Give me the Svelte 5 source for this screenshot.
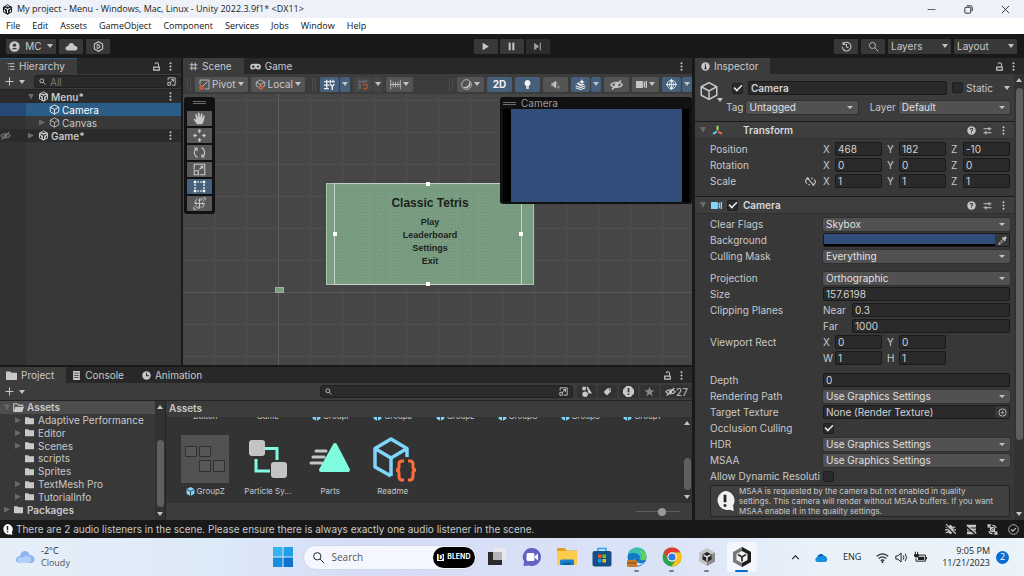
<script>
	const menus = ['File', 'Edit', 'Assets', 'GameObject', 'Component', 'Services', 'Jobs', 'Window', 'Help'];

	const hierarchy = [
		{ name: 'Menu*', icon: 'unity', arrow: 'down', level: 0, scene: true },
		{ name: 'Camera', icon: 'cube', arrow: '', level: 1, selected: true },
		{ name: 'Canvas', icon: 'cube', arrow: 'right', level: 1 },
		{ name: 'Game*', icon: 'unity', arrow: 'right', level: 0, scene: true, hidden: true }
	];

	const tools = [
		{ name: 'Hand', icon: 'hand' },
		{ name: 'Move', icon: 'move' },
		{ name: 'Rotate', icon: 'rotate' },
		{ name: 'Scale', icon: 'scale' },
		{ name: 'Rect', icon: 'rect' },
		{ name: 'Transform', icon: 'transform' }
	];
	let tool = $state('Rect');

	const transform = [
		{ name: 'Position', values: ['468', '182', '-10'] },
		{ name: 'Rotation', values: ['0', '0', '0'] },
		{ name: 'Scale', values: ['1', '1', '1'], link: true }
	];

	const folders = [
		{ name: 'Assets', arrow: 'down', level: 0 },
		{ name: 'Adaptive Performance', arrow: 'right', level: 1 },
		{ name: 'Editor', arrow: 'right', level: 1 },
		{ name: 'Scenes', arrow: 'right', level: 1 },
		{ name: 'scripts', arrow: '', level: 1 },
		{ name: 'Sprites', arrow: '', level: 1 },
		{ name: 'TextMesh Pro', arrow: 'right', level: 1 },
		{ name: 'TutorialInfo', arrow: 'right', level: 1 },
		{ name: 'Packages', arrow: 'right', level: 0 }
	];

	const prevAssets = ['Button', 'Game', 'GroupI', 'GroupJ', 'GroupL', 'GroupO', 'GroupS', 'GroupT'];
	const assets = [
		{ name: 'GroupZ', art: 'groupz', prefab: true },
		{ name: 'Particle Sy...', art: 'particle' },
		{ name: 'Parts', art: 'parts' },
		{ name: 'Readme', art: 'readme' }
	];

	const cube = '<path d="M8 1.3 14.2 4.6V11.4L8 14.7 1.8 11.4V4.6ZM1.8 4.6 8 8l6.2-3.4M8 8v6.7"/>';
	const unity = '<path class="solid" d="M8 .5 14.6 4.2V11.8L8 15.5 1.4 11.8V4.2Z"/><path stroke="var(--hole, #282828)" stroke-width="1.5" d="M8 8v5M8 8 3.8 5.6M8 8l4.2-2.4M5 11.6 3.6 10.6V8.4M11 11.6l1.4-1V8.4M5.8 3.6 8 2.5l2.2 1.1"/>';
	const eyeOff = '<path d="M1 8.5C3.5 4.5 12.5 4.5 15 8.5C12.5 12.5 3.5 12.5 1 8.5Z" stroke-width="1.5"/><circle cx="8" cy="8.5" r="2.5" class="solid"/><path d="M2.5 14 13.5 3" stroke-width="1.8"/>';

	const icons = {
		cube,
		unity,
		eyeOff,
		user: '<circle class="solid" cx="8" cy="8" r="7.5"/><circle cx="8" cy="6" r="2.5" fill="#383838" stroke="none"/><path d="M3.5 12Q8 7.5 12.5 12" fill="#383838" stroke="none"/>',
		cloud: '<path class="solid" d="M4 13C-1 13 0 7.5 4 7.5C4.5 2.5 11 2.5 11.5 7C16.5 7 16.5 13 12.5 13Z"/>',
		gear: '<path stroke-width="1.6" d="M8 1 14 4.5V11.5L8 15 2 11.5V4.5Z"/><path d="M6 5v6l4.5-3ZM6 5c5-1 5 7 0 6"/>',
		play: '<path class="solid" d="M3 1.500v13L14 8Z"/>',
		pause: '<path class="solid" d="M3 1.500h3.500v13H3zM9.500 1.500H13v13H9.500z"/>',
		step: '<path class="solid" d="M2 1.500v13L11 8ZM12 1.500h2v13h-2z"/>',
		history: '<path d="M3 4.5A6.3 6.3 0 1 1 1.8 8.5M3 1.5v3.5h3.5M8 4.5V8.5l3 1.5" stroke-width="1.5"/>',
		search: '<circle cx="6.5" cy="6.5" r="4.5"/><path d="M10 10l5 5"/>',
		list: '<path d="M4 3h11M7 8h8M7 13h8M1 3h1M3.5 8h1M3.5 13h1" stroke-width="1.8"/>',
		lock: '<path class="solid" fill-rule="evenodd" d="M2 8h12v7.500H2zM4 10v3.500h8v-3.500z"/><path d="M11.500 8V4.500Q11.500 1.500 8.500 1.500T5.500 4" stroke-width="1.8"/>',
		dots: '<circle class="solid" cx="8" cy="2.300" r="1.800"/><circle class="solid" cx="8" cy="8" r="1.800"/><circle class="solid" cx="8" cy="13.700" r="1.800"/>',
		plus: '<path d="M8 1v14M1 8h14" stroke-width="1.9"/>',
		picker: '<path d="M2 6V1.5h12.5v13H9M6 9.5 11.5 4.5M7.500 4.500h4v4" stroke-width="1.6"/><path d="M1.500 9.500h5v5h-5z" stroke-width="1.6"/>',
		grid: '<path d="M5 1v14M11 1v14M1 5h14M1 11h14" stroke-width="1.7"/>',
		game: '<path class="solid" fill-rule="evenodd" d="M4.5 4h7a4 4 0 0 1 0 8.5C9.5 12.5 9 11 8 11s-1.5 1.5-3.5 1.5a4 4 0 0 1 0-8.5ZM4 6v1.5H2.5v1.5H4v1.5h1.5V9H7V7.5H5.5V6ZM10 7v2.5h3V7Z"/>',
		pivot: '<path d="M1.5 8V1.5h13v13H8M5.500 10.500 12.5 3.5"/><circle cx="3.500" cy="12.500" r="2.3" stroke="#e0613b" stroke-width="2"/>',
		local: '<path d="M8 1.3 14.2 4.6V10L11 12M1.8 10V4.6L8 1.3M1.8 4.6 8 8l6.2-3.4M8 8v2M1.800 10 5 12"/><circle cx="8.500" cy="12.500" r="2.3" stroke="#e0613b" stroke-width="2"/>',
		gridY: '<path d="M4 1v14M9 1v5M13 1v4M0 4h16M0 9h8M0 14h7" stroke-width="1.8"/><path d="M9 7l3 4 3-4M12 11v5" stroke-width="2"/>',
		magnet: '<path d="M4 1v13M9 1v5M13 1v4M1 4h14M1 9h7M1 13h5" stroke-dasharray="2 1"/><path d="M9 8h3.5a3 3 0 0 1 0 6H9" stroke="#b8502f" stroke-width="2.3"/>',
		ruler: '<path d="M1 1v14M15 1v14M1 8h14M4.5 4v8M8 4v8M11.5 4v8"/>',
		sphere: '<circle cx="8" cy="8" r="7"/><path class="solid" d="M12 3a6 6 0 1 1-9 8.5C8 13 13 9 12 3Z"/>',
		bulb: '<path class="solid" d="M8 0a5.5 5.5 0 0 1 3 10l-.5 2h-5L5 10a5.500 5.500 0 0 1 3-10ZM5.500 13h5v2.500h-5z"/>',
		audio: '<path class="solid" d="M1 5h2v6H1zM4 5l5-3.500v13l-5-3.500z"/><path d="M11 4v4M10.500 10l5 5M15.500 10l-5 5"/>',
		effects: '<path class="solid" d="M1 9l7 2.5L15 9v1.5L8 13.5 1 10.5zM1 12l7 2.5 7-2.5v1.5L8 16 1 13.5zM2 6l4-1 1 2 2 1 3-1 2 1-6 2.5z"/><path class="solid" d="M10 0l1.2 3 3 1.2-3 1.2L10 8.5 8.8 5.4l-3-1.2 3-1.2z"/>',
		camera: '<path class="solid" d="M0 3h10v10H0zM11 5l2-2v10l-2-2zM14 3h2v10h-2z"/>',
		globe: '<circle cx="8" cy="8" r="6.3"/><path d="M8 0v16M0 8h16M8 1.7Q14 8 8 14.3M8 1.7Q2 8 8 14.3"/><path class="solid" d="M6 2.5 8 0l2 2.5zM6 13.5l2 2.5 2-2.5zM0 8l2.5-2v4z"/>',
		info: '<circle class="solid" cx="8" cy="8" r="7.5"/><path d="M8 3v2M6.5 7H8v5M6 12h4" stroke="#282828" stroke-width="2"/>',
		axes: '<path d="M8 8V1" stroke="#9ade5b" stroke-width="3"/><path d="M7 9.500 1.500 13" stroke="#5cc8f5" stroke-width="3"/><path d="M9 9.500l5.500 3.500" stroke="#f0623a" stroke-width="3"/>',
		help: '<circle class="solid" cx="8" cy="8" r="7.5"/><path d="M5.5 6.5Q5.5 4 8 4T10.5 6.3Q10.5 7.5 8 8.5v1.5M8 11v2" stroke="#3e3e3e" stroke-width="1.8"/>',
		preset: '<path d="M1 5h14M11 2v6M1 12h14M5 9v6" stroke-width="1.8"/>',
		link: '<path d="M6 3.500H5a4 4 0 0 0-2 7.500M10 12.500h1a4 4 0 0 0 2-7.500M9 3.500h2M5 12.500h2M2.500 2l11 12" stroke-width="1.600"/>',
		dropper: '<path class="solid" d="M9 3l4-2.5 2.5 2.5L13 7l1 1-1.5 1.5-6-6L8 2z"/><path d="M8.5 6 2.5 12l-1 3 3-1 6-6" stroke-width="1.5"/>',
		target: '<circle cx="8" cy="8" r="6.5" stroke-width="1.5"/><circle class="solid" cx="8" cy="8" r="2"/>',
		folder: '<path class="solid" d="M0 2h6l2 2h8v10.5H0z"/>',
		folderOpen: '<path class="solid" d="M3.5 7H16l-2.5 7.5H.5z"/><path d="M1 13V2.5h5l2 2h6v2" stroke-width="1.600"/>',
		console: '<path class="solid" fill-rule="evenodd" d="M2 0h12v16H2zM4 3v1.5h8V3zM4 7v1.5h8V7zM4 11v1.5h8V11z"/>',
		clock: '<circle class="solid" cx="8" cy="8" r="7.5"/><path d="M8 3v5.5h4.5" stroke="#282828" stroke-width="1.8"/>',
		types: '<circle class="solid" cx="6" cy="12" r="4"/><path class="solid" d="M2 1h5v5H2zM8 1h2l6 10h-5z"/>',
		tag: '<path class="solid" fill-rule="evenodd" d="M8 2h6v6l-7 7-6-6zM11 4v2h2V4z"/>',
		alert: '<path class="solid" d="M5 0h6l5 5v6l-5 5H5l-5-5V5z"/><path d="M8 3v6M8 11v2" stroke="#383838" stroke-width="2.5"/>',
		star: '<path class="solid" d="M8 1l2 5h5.5l-4.5 3.5 1.7 5.5L8 11.8 3.3 15 5 9.5.5 6H6z"/>',
		bubble: '<path class="solid" d="M8 0a7.6 7.6 0 0 1 6.5 11.5L15 16l-3.5-1A7.6 7.6 0 1 1 8 0Z"/><path d="M8 3v6M8 10.5v2" stroke="#222" stroke-width="2.2"/>',
		bug: '<path class="solid" d="M4.500 4q3.500-5 7 0v8q-3.500 5-7 0z"/><path d="M1 4l4 2M0 8.5h5M1 13l4-2M15 4l-4 2M16 8.5h-5M15 13l-4-2" stroke-width="1.8"/><path d="M1 2l14 14" stroke="#191919" stroke-width="2"/><path d="M1.500 0 16 14.500" stroke-width="1.600"/>',
		stack: '<path class="solid" d="M1.500 1h13v4h-13zM1.500 6.500h13v3h-13zM1.500 11h13v4h-13z"/><path d="M1 4l14 12" stroke="#191919" stroke-width="2.4"/><path d="M1 1.5l14 12.500" stroke-width="1.600"/>',
		refresh: '<path d="M6 1.500H2v4M10 14.500h4v-4M2.500 10.500a6 6 0 0 0 5.500 3.500M13.500 5.500a6 6 0 0 0-5.500-3.500" stroke-width="2"/><circle cx="8" cy="8" r="3" stroke-width="1.800"/><path d="M1 1l14 14" stroke-width="1.8"/>',
		ok: '<circle cx="8" cy="8" r="7"/><path d="M4.5 8l2.5 2.5L11.5 6" stroke-width="1.6"/>',
		hand: '<path class="solid" d="M5 15 1 9.5Q.5 8 2 8.2L4 9.5 2.8 3.5Q2.8 2 4.3 2.6L6 7V1.3Q7 0 8 1.3L8.5 7 10 1.8Q11.3 1 11.8 2.3L11.2 7.6 13 4.3Q14.5 3.6 14.5 5L13 12l-2 3z"/>',
		move: '<path d="M8 1v4M8 11v4M1 8h4M11 8h4M6 3l2-2 2 2M6 13l2 2 2-2M3 6 1 8l2 2M13 6l2 2-2 2" stroke-width="1.400"/>',
		rotate: '<path d="M5.5 14A6.5 6.5 0 0 1 4 3M10.5 2A6.5 6.5 0 0 1 12 13M1.5 2.5H5V6M14.5 13.5H11V10" stroke-width="1.4"/>',
		scale: '<path d="M1.5 8V1.5h13v13H8M1.5 9.5h5v5h-5zM8 8l4-4M9 4h3v3" stroke-width="1.400"/>',
		rect: '<path d="M2.500 5v6M13.500 5v6M5 2.500h6M5 13.500h6" stroke-width="1.4" stroke-dasharray="2.400 1.200"/><path class="solid" d="M1 1h3v3H1zM12 1h3v3h-3zM1 12h3v3H1zM12 12h3v3h-3z"/>',
		transform: '<circle cx="8" cy="8" r="6" stroke-dasharray="7 2"/><path d="M8 3v10M3 8h10M6.5 4.5 8 3l1.5 1.5M6.5 11.5 8 13l1.5-1.5M4.5 6.5 3 8l1.5 1.5M11.5 6.5 13 8l-1.500 1.500M12 1h3v3M1 12v3h3"/>',
		prefab: '<path fill="#7fd6fd" stroke="none" d="M8 0 15 3.5V12L8 16 1 12V3.5Z"/><path stroke="#333" stroke-width="1.600" d="M1 4l7 3.5L15 4M8 7.5V16"/>',
		min: '<path d="M1 8h14"/>',
		restore: '<rect x="1.5" y="4" width="10.5" height="10.5" rx="2" stroke-width="1.600"/><path d="M5 1.5h7q2.5 0 2.5 2.5v7" stroke-width="1.600"/>',
		close: '<path d="M1.500 1.500l13 13M14.500 1.500l-13 13" stroke-width="1.500"/>',
		chevron: '<path d="M2 11l6-6 6 6" stroke-width="1.8"/>',
		onedrive: '<path fill="#0a5fb4" stroke="none" d="M3 9C2 4 9 1.5 11 6l-5 6z"/><path fill="#1490df" stroke="none" d="M10 6c5-1 7 6 3 7.500H3c-4-1-3-6 1-6z"/>',
		wifi: '<path d="M1 6.5q7-6 14 0M3.5 9.3q4.5-4 9 0M5.8 11.8q2.2-2 4.4 0" stroke-width="1.5"/><circle class="solid" cx="8" cy="13.5" r="1.3"/>',
		speaker: '<path d="M1 6h2.5L7.5 2.5v11L3.5 10H1zM10 5.5q2 2.5 0 5M12.5 3.500q3.500 4.500 0 9"/>',
		battery: '<path d="M3 5h11v7.500H2.500V9"/><path class="solid" d="M5 7h7.5v4H5zM14.5 7.5H16v2.5h-1.5zM0 4h6v2.500q-3 3-6 0zM1 1h1.200v3H1zM3.800 1H5v3H3.800z"/>'
	};
</script>

{#snippet ico(name, size = 'm')}
	<svg class="ico {size}" viewBox="0 0 16 16" aria-hidden="true">{@html icons[name]}</svg>
{/snippet}

{#snippet dropdown(id, value)}
	<span class="select">
		<select {id}>
			<option>{value}</option>
		</select>
	</span>
{/snippet}

{#snippet axis(name, value)}
	<label class="axis"><span>{name}</span><input type="text" {value} /></label>
{/snippet}

<div class="screen">
	<header class="titlebar">
		{@render ico('unity', 'l')}
		<span class="title">My project - Menu - Windows, Mac, Linux - Unity 2022.3.9f1* &lt;DX11&gt;</span>
		<div class="window-buttons">
			<button aria-label="Minimize">{@render ico('min')}</button>
			<button aria-label="Restore">{@render ico('restore')}</button>
			<button aria-label="Close">{@render ico('close')}</button>
		</div>
	</header>

	<nav class="menubar">
		{#each menus as menu}
			<button>{menu}</button>
		{/each}
	</nav>

	<div class="toolbar">
		<div class="group">
			<button class="btn account">{@render ico('user', 'l')}MC<i class="caret"></i></button>
			<button class="btn" aria-label="Cloud">{@render ico('cloud', 'xl')}</button>
			<button class="btn" aria-label="Services">{@render ico('gear', 'l')}</button>
		</div>
		<div class="group play">
			<button class="btn" aria-label="Play">{@render ico('play')}</button>
			<button class="btn" aria-label="Pause">{@render ico('pause')}</button>
			<button class="btn dim" aria-label="Step">{@render ico('step')}</button>
		</div>
		<div class="group end">
			<button class="btn" aria-label="History">{@render ico('history', 'l')}</button>
			<button class="btn" aria-label="Search">{@render ico('search', 'l')}</button>
			<button class="btn wide">Layers<i class="caret"></i></button>
			<button class="btn wide">Layout<i class="caret"></i></button>
		</div>
	</div>

	<main>
		<div class="left">
			<div class="upper">
				<section class="panel hierarchy">
					<div class="tabs">
						<button class="tab active focus">{@render ico('list')}Hierarchy</button>
						<span class="tab-tools">{@render ico('lock')}{@render ico('dots')}</span>
					</div>
					<div class="panel-bar">
						<button class="add" aria-label="Create">{@render ico('plus')}<i class="caret"></i></button>
						<label class="searchbox">
							{@render ico('search', 's')}
							<input type="text" placeholder="All" aria-label="Search hierarchy" />
							{@render ico('picker')}
						</label>
					</div>
					<ul class="objects">
						{#each hierarchy as item}
							<li class:scene={item.scene} class:selected={item.selected}>
								<span class="gutter">{#if item.hidden}{@render ico('eyeOff', 'l')}{/if}</span>
								<span class="item level{item.level}">
									<i class="arrow {item.arrow}"></i>
									{@render ico(item.icon, 'l')}
									{item.name}
								</span>
								{#if item.scene}{@render ico('dots')}{/if}
							</li>
						{/each}
					</ul>
				</section>

				<section class="panel scene-panel">
					<div class="tabs">
						<button class="tab active">{@render ico('grid')}Scene</button>
						<button class="tab">{@render ico('game', 'l')}Game</button>
						<span class="tab-tools">{@render ico('dots')}</span>
					</div>
					<div class="scene-bar">
						<div class="tools">
							<i class="grip"></i>
							<button class="tbtn">{@render ico('pivot', 'l')}Pivot<i class="caret"></i></button>
							<button class="tbtn">{@render ico('local', 'l')}Local<i class="caret"></i></button>
							<i class="grip"></i>
							<span class="split">
								<button class="tbtn on" aria-label="Grid">{@render ico('gridY', 'l')}</button>
								<button class="tbtn on drop" aria-label="Grid options"><i class="caret"></i></button>
							</span>
							<span class="split">
								<button class="tbtn off" aria-label="Snap">{@render ico('magnet', 'l')}</button>
								<button class="tbtn off drop" aria-label="Snap options"><i class="caret"></i></button>
							</span>
							<button class="tbtn" aria-label="Increment">{@render ico('ruler', 'l')}<i class="caret"></i></button>
						</div>
						<div class="tools">
							<i class="grip"></i>
							<button class="tbtn" aria-label="Draw mode">{@render ico('sphere', 'l')}<i class="caret"></i></button>
							<button class="tbtn on sq twod">2D</button>
							<button class="tbtn on sq" aria-label="Lighting">{@render ico('bulb')}</button>
							<button class="tbtn sq" aria-label="Audio">{@render ico('audio')}</button>
							<span class="split">
								<button class="tbtn on" aria-label="Effects">{@render ico('effects', 'l')}</button>
								<button class="tbtn on drop" aria-label="Effect options"><i class="caret"></i></button>
							</span>
							<button class="tbtn sq" aria-label="Visibility">{@render ico('eyeOff', 'xl')}</button>
							<button class="tbtn" aria-label="Camera settings">{@render ico('camera', 'l')}<i class="caret"></i></button>
							<span class="split">
								<button class="tbtn on" aria-label="Gizmos">{@render ico('globe', 'l')}</button>
								<button class="tbtn on drop" aria-label="Gizmo options"><i class="caret"></i></button>
							</span>
						</div>
					</div>

					<div class="viewport">
						<div class="canvas-object">
							<svg class="tiles" aria-hidden="true">
								<defs>
									<pattern id="tile" width="11" height="9" patternUnits="userSpaceOnUse">
										<path d="M1.5 1.5h8v6h-8zM4.5 3.5h2v2h-2z" fill="none" stroke="#74977b" />
									</pattern>
								</defs>
								<rect width="100%" height="100%" fill="url(#tile)" />
							</svg>
							<div class="menu-text">
								<h2>Classic Tetris</h2>
								<p>Play</p>
								<p>Leaderboard</p>
								<p>Settings</p>
								<p>Exit</p>
							</div>
							<i class="frame"></i>
							<i class="handle n"></i>
							<i class="handle s"></i>
							<i class="handle w"></i>
							<i class="handle e"></i>
						</div>
						<i class="mini"></i>

						<div class="tool-overlay">
							<i class="bars"></i>
							{#each tools as t}
								<button class:on={tool === t.name} aria-label={t.name} onclick={() => (tool = t.name)}>
									{@render ico(t.icon, 'xl')}
								</button>
							{/each}
						</div>

						<div class="camera-overlay">
							<div class="camera-title"><i class="bars"></i>Camera</div>
							<div class="camera-view"></div>
						</div>
					</div>
				</section>
			</div>

			<section class="panel project">
				<div class="tabs">
					<button class="tab active">{@render ico('folder', 'l')}Project</button>
					<button class="tab">{@render ico('console')}Console</button>
					<button class="tab">{@render ico('clock')}Animation</button>
					<span class="tab-tools">{@render ico('lock')}{@render ico('dots')}</span>
				</div>
				<div class="panel-bar">
					<button class="add" aria-label="Create asset">{@render ico('plus')}<i class="caret"></i></button>
					<div class="project-search">
						<label class="searchbox">
							{@render ico('search', 's')}
							<input type="text" aria-label="Search project" />
							{@render ico('picker')}
						</label>
						<button aria-label="Search by type">{@render ico('types', 'l')}</button>
						<button aria-label="Search by label">{@render ico('tag')}</button>
						<button aria-label="Search by import log">{@render ico('alert', 'l')}</button>
						<button class="faded" aria-label="Save search">{@render ico('star', 'l')}</button>
						<button>{@render ico('eyeOff', 'l')}27</button>
					</div>
				</div>
				<div class="browser">
					<ul class="folders">
						{#each folders as folder, i}
							<li class="level{folder.level}" class:current={i === 0}>
								<i class="arrow {folder.arrow}"></i>
								{@render ico(i === 0 ? 'folderOpen' : 'folder', i === 0 ? 'l' : 'm')}
								{folder.name}
							</li>
						{/each}
					</ul>
					<div class="scrollbar tree-scroll"><i class="up"></i><i class="thumb"></i><i class="down"></i></div>
					<div class="files">
						<div class="crumb">Assets</div>
						<div class="file-area">
							<div class="file-grid">
								{#each prevAssets as name, i}
									<span class="file-label">
										{#if i > 1}{@render ico('prefab')}{/if}{name}
									</span>
								{/each}
								{#each assets as asset}
									<figure>
										<svg viewBox="0 0 48 48" class="art" aria-hidden="true">
											{#if asset.art === 'groupz'}
												<rect width="48" height="48" fill="#525252" />
												<path d="M4.5 11.5h11v10h-11zM18.5 11.5h11v10h-11zM18.5 25.5h11v11h-11zM32.5 25.5h11v11h-11z" fill="#575757" stroke="#303030" />
											{:else if asset.art === 'particle'}
												<path d="M18 13.500h15V25M12 24v12h14" fill="none" stroke="#7ffbe6" stroke-width="3" />
												<rect x="5" y="5" width="16" height="16" rx="3" fill="#c4c4c4" />
												<rect x="27" y="27" width="16" height="16" rx="3" fill="#c4c4c4" />
											{:else if asset.art === 'parts'}
												<path d="M10 16h10M7 22h11M5 28h11" stroke="#c4c4c4" stroke-width="3" stroke-linecap="round" />
												<path d="M29 10 42 35H15Z" fill="#7ffbe0" stroke="#7ffbe0" stroke-width="4" stroke-linejoin="round" />
											{:else}
												<path d="M38 22V13.500L22 4 6 13.500V32L22 41M6 13.500 22 23l16-9.500M22 23v18" fill="none" stroke="#7fd6fd" stroke-width="3.5" stroke-linejoin="round" />
												<path d="M35 26h-2q-3 0-3 3v3q0 3-3 3q3 0 3 3v3q0 4 3 4h2M39 26h2q3 0 3 3v3q0 3 3 3q-3 0-3 3v3q0 4-3 4h-2" fill="none" stroke="#ff6e40" stroke-width="3" />
											{/if}
										</svg>
										<figcaption class="file-label">
											{#if asset.prefab}{@render ico('prefab')}{/if}{asset.name}
										</figcaption>
									</figure>
								{/each}
							</div>
							<div class="scrollbar file-scroll"><i class="up"></i><i class="thumb"></i><i class="down"></i></div>
						</div>
						<div class="file-footer">
							<input type="range" min="0" max="100" value="60" aria-label="Icon size" />
						</div>
					</div>
				</div>
			</section>
		</div>

		<section class="panel inspector">
			<div class="tabs">
				<button class="tab active">{@render ico('info')}Inspector</button>
				<span class="tab-tools">{@render ico('lock')}{@render ico('dots')}</span>
			</div>
			<div class="inspector-body">
				<div class="components">
					<div class="object-head">
						<span class="object-icon">{@render ico('cube', 'xxl')}<i class="caret"></i></span>
						<div class="object-fields">
							<div class="object-row">
								<input type="checkbox" checked aria-label="Active" />
								<input type="text" class="strong" value="Camera" aria-label="Name" />
								<label class="static"><input type="checkbox" />Static</label>
								<i class="caret"></i>
							</div>
							<div class="object-row tags">
								<label for="tag">Tag</label>
								{@render dropdown('tag', 'Untagged')}
								<label for="layer" class="layer">Layer</label>
								{@render dropdown('layer', 'Default')}
							</div>
						</div>
					</div>

					<div class="component-head">
						<i class="arrow down"></i>
						{@render ico('axes', 'l')}
						<h3>Transform</h3>
						<span class="head-tools">{@render ico('help')}{@render ico('preset')}{@render ico('dots')}</span>
					</div>
					<div class="fields">
						{#each transform as row}
							<div class="row">
								<span class="name">{row.name}{#if row.link}{@render ico('link', 'l')}{/if}</span>
								<div class="axes">
									{@render axis('X', row.values[0])}
									{@render axis('Y', row.values[1])}
									{@render axis('Z', row.values[2])}
								</div>
							</div>
						{/each}
					</div>

					<div class="component-head camera-head">
						<i class="arrow down"></i>
						<span class="camera-icon">{@render ico('camera', 'l')}</span>
						<input type="checkbox" checked aria-label="Camera enabled" />
						<h3>Camera</h3>
						<span class="head-tools">{@render ico('help')}{@render ico('preset')}{@render ico('dots')}</span>
					</div>
					<div class="fields">
						<div class="row">
							<label for="clear">Clear Flags</label>
							{@render dropdown('clear', 'Skybox')}
						</div>
						<div class="row">
							<span class="name">Background</span>
							<div class="color-field">
								<button class="swatch" aria-label="Background colour"></button>
								<button class="pick" aria-label="Pick colour">{@render ico('dropper')}</button>
							</div>
						</div>
						<div class="row">
							<label for="mask">Culling Mask</label>
							{@render dropdown('mask', 'Everything')}
						</div>
						<div class="row spaced">
							<label for="projection">Projection</label>
							{@render dropdown('projection', 'Orthographic')}
						</div>
						<div class="row">
							<label for="size">Size</label>
							<input id="size" type="text" value="157.6198" />
						</div>
						<div class="row">
							<span class="name">Clipping Planes</span>
							<label class="plane"><span>Near</span><input type="text" value="0.3" /></label>
						</div>
						<div class="row">
							<span></span>
							<label class="plane"><span>Far</span><input type="text" value="1000" /></label>
						</div>
						<div class="row">
							<span class="name">Viewport Rect</span>
							<div class="axes">{@render axis('X', '0')}{@render axis('Y', '0')}</div>
						</div>
						<div class="row">
							<span></span>
							<div class="axes">{@render axis('W', '1')}{@render axis('H', '1')}</div>
						</div>
						<div class="row spaced">
							<label for="depth">Depth</label>
							<input id="depth" type="text" value="0" />
						</div>
						<div class="row">
							<label for="path">Rendering Path</label>
							{@render dropdown('path', 'Use Graphics Settings')}
						</div>
						<div class="row">
							<label for="texture">Target Texture</label>
							<div class="object-field">
								<input id="texture" type="text" value="None (Render Texture)" />
								<button class="pick" aria-label="Select texture">{@render ico('target')}</button>
							</div>
						</div>
						<div class="row">
							<label for="occlusion">Occlusion Culling</label>
							<input id="occlusion" type="checkbox" checked />
						</div>
						<div class="row">
							<label for="hdr">HDR</label>
							{@render dropdown('hdr', 'Use Graphics Settings')}
						</div>
						<div class="row">
							<label for="msaa">MSAA</label>
							{@render dropdown('msaa', 'Use Graphics Settings')}
						</div>
						<div class="row">
							<label for="dynamic">Allow Dynamic Resoluti</label>
							<input id="dynamic" type="checkbox" />
						</div>
						<div class="notice">
							{@render ico('bubble', 'xxl')}
							<p>
								MSAA is requested by the camera but not enabled in quality<br />
								settings. This camera will render without MSAA buffers. If you want<br />
								MSAA enable it in the quality settings.
							</p>
						</div>
					</div>
				</div>
				<div class="scrollbar inspector-scroll"><i class="up"></i><i class="thumb"></i><i class="down"></i></div>
			</div>
		</section>
	</main>

	<footer class="status">
		{@render ico('bubble', 'l')}
		<span class="message">There are 2 audio listeners in the scene. Please ensure there is always exactly one audio listener in the scene.</span>
		<span class="status-icons">
			{@render ico('bug', 'l')}{@render ico('stack', 'l')}{@render ico('refresh', 'l')}{@render ico('ok', 'l')}
		</span>
	</footer>

	<div class="taskbar">
		<button class="weather">
			<svg viewBox="0 0 20 14" class="weather-icon" aria-hidden="true">
				<path d="M5 13C-1 13 0 6 5 6C6-1 14 0 14.5 5C21 5 21 13 16 13Z" fill="#8db5ee" />
				<path d="M3 12C1 9 5 6 8 8C10 4 17 6 16 11Q15 13 12 13H5Z" fill="#b4d0f8" />
			</svg>
			<span><span class="temp">-2°C</span><br />Cloudy</span>
		</button>

		<div class="apps">
			<button aria-label="Start">
				<svg viewBox="0 0 20 20" aria-hidden="true">
					<path d="M0 0h9.5v9.5H0z" fill="#35b4f0" /><path d="M10.5 0H20v9.5h-9.5z" fill="#1e9fe6" />
					<path d="M0 10.5h9.5V20H0z" fill="#158ee0" /><path d="M10.5 10.5H20V20h-9.5z" fill="#0f74d0" />
				</svg>
			</button>
			<label class="task-search">
				{@render ico('search', 'xl')}
				<input type="text" placeholder="Search" aria-label="Search" />
				<span class="blend"><span class="blend-mark">D</span>BLEND</span>
			</label>
			<button aria-label="Task view">
				<svg viewBox="0 0 20 20" aria-hidden="true">
					<rect x="1" y="5" width="14" height="13" fill="#2b2b2b" /><rect x="6" y="1" width="13" height="12" fill="#e8e8ea" /><rect x="6" y="5" width="9" height="8" fill="#b5b5b8" />
				</svg>
			</button>
			<button aria-label="Chat">
				<svg viewBox="0 0 20 20" aria-hidden="true">
					<path d="M10 1a9 9 0 1 1-3 17.5L1.5 19 2 14.5A9 9 0 0 1 10 1Z" fill="#6561c4" />
					<rect x="4.5" y="6" width="8" height="8" rx="1.5" fill="#fff" /><path d="M13 9l3-2.5v7L13 11z" fill="#fff" />
				</svg>
			</button>
			<button aria-label="Files">
				<svg viewBox="0 0 20 20" aria-hidden="true">
					<path d="M0 1h8l1.5 2.5H20V8H0z" fill="#e0a21b" /><path d="M0 4h20v14H0z" fill="#fccd4d" /><path d="M3 18v-4q0-1.5 1.5-1.5h11q1.5 0 1.5 1.5v4z" fill="#1b7fd0" /><path d="M6 15.5h8V18H6z" fill="#0d5fa8" />
				</svg>
			</button>
			<button aria-label="Store">
				<svg viewBox="0 0 20 20" aria-hidden="true">
					<path d="M6 5V1.5h8V5" fill="none" stroke="#2aa4e8" stroke-width="1.5" /><rect x=".5" y="4" width="19" height="15.5" rx="2" fill="#164f86" />
					<path d="M6 7.5h3.5V11H6z" fill="#f0542c" /><path d="M10.5 7.5H14V11h-3.5z" fill="#80bb16" /><path d="M6 12h3.5v3.5H6z" fill="#13a2ea" /><path d="M10.5 12H14v3.5h-3.5z" fill="#fbb914" />
				</svg>
			</button>
			<button class="running" aria-label="Edge">
				<svg viewBox="0 0 20 20" aria-hidden="true">
					<circle cx="10" cy="10" r="9.5" fill="#1577c8" /><path d="M1 7C4-2 19-2 19.5 10C19 14 14 13.5 12.5 12C15 8 8 4 1 7Z" fill="#3cc3b0" /><path d="M12 3q7 0 7.5 7Q19 14 14 13q3-5-2-10Z" fill="#67d05c" />
					<path d="M8 10q-1 5 5 6.5 3 0 5-2Q11 22 7 15Z" fill="#cfe8fa" /><rect y="13" width="10" height="7" rx="1" fill="#c87a2c" /><path d="M0 15.5h10v1H0z" fill="#87490f" />
				</svg>
			</button>
			<button class="running" aria-label="Chrome">
				<svg viewBox="0 0 20 20" aria-hidden="true">
					<circle cx="10" cy="10" r="9.5" fill="#2fa24c" /><path d="M1.8 5.2A9.5 9.5 0 0 1 18.3 5.5H10L5.8 12Z" fill="#e33b2e" /><path d="M18.3 5.5A9.5 9.5 0 0 1 9.5 19.5L14 12.5 12 5.5Z" fill="#fbc116" />
					<circle cx="10" cy="10" r="4.7" fill="#fff" /><circle cx="10" cy="10" r="3.6" fill="#3277e8" />
				</svg>
			</button>
			<button class="running" aria-label="Unity Hub">
				<svg viewBox="0 0 20 20" aria-hidden="true">
					<path d="M10 1 18 5.5V14.5L10 19 2 14.5V5.5Z" fill="#c4c4c4" /><path d="M10 10 18 5.5V14.5L10 19Z" fill="#8c8c8c" /><path d="M10 5 14.5 7.5V12.5L10 15 5.5 12.5V7.5Z" fill="#222" /><path d="M10 10v4M10 10 6.5 8M10 10l3.5-2" stroke="#ddd" stroke-width="1.5" />
				</svg>
			</button>
			<button class="running current-app" aria-label="Unity">
				<svg viewBox="0 0 20 20" aria-hidden="true">
					<path d="M10 0 19 5V15L10 20 1 15V5Z" fill="#777" /><path d="M10 0 19 5V15L10 20Z" fill="#1d1d1d" /><path d="M10 4 15.5 7V13L10 16 4.5 13V7Z" fill="#f4f4f4" /><path d="M10 10v4.5M10 10 6 7.5M10 10l4-2.5" stroke="#333" stroke-width="1.8" />
				</svg>
			</button>
		</div>

		<div class="tray">
			<button aria-label="Hidden icons">{@render ico('chevron')}</button>
			<button aria-label="OneDrive">{@render ico('onedrive', 'xl')}</button>
			<button>ENG</button>
			<span class="network">{@render ico('wifi', 'xl')}{@render ico('speaker', 'xl')}{@render ico('battery', 'xl')}</span>
			<time>9:05 PM<br />11/21/2023</time>
			<span class="badge">2</span>
		</div>
	</div>
</div>

<style>
	:global(body) {
		background: #191919;
	}

	.screen {
		display: flex;
		flex-direction: column;
		height: 100vh;
		overflow: hidden;
		font-family: Inter, 'Liberation Sans', sans-serif;
		font-size: 10px;
		line-height: 12px;
		color: #c8c8c8;
		background: #191919;
	}

	.screen * {
		box-sizing: border-box;
	}

	button,
	input,
	select {
		font: inherit;
		color: inherit;
		background: none;
		border: 0;
		margin: 0;
		padding: 0;
		min-width: 0;
	}

	button {
		display: flex;
		align-items: center;
		justify-content: center;
		white-space: nowrap;
	}

	h2,
	h3,
	p,
	ul,
	figure {
		margin: 0;
		padding: 0;
		list-style: none;
	}

	.ico {
		width: 9px;
		height: 9px;
		flex: none;
		fill: none;
		stroke: currentColor;
		stroke-width: 1.2;
	}

	.ico :global(.solid) {
		fill: currentColor;
		stroke: none;
	}

	.ico.s {
		width: 7px;
		height: 7px;
		stroke-width: 2;
	}

	.ico.l {
		width: 11px;
		height: 11px;
	}

	.ico.xl {
		width: 13px;
		height: 13px;
	}

	.ico.xxl {
		width: 20px;
		height: 20px;
	}

	.caret {
		flex: none;
		border: 3px solid transparent;
		border-top: 4px solid #c4c4c4;
		border-bottom: 0;
	}

	.arrow {
		flex: none;
		width: 6px;
		height: 6px;
	}

	.arrow.down {
		background: #6a6a6a;
		clip-path: polygon(0 0, 100% 0, 50% 100%);
	}

	.arrow.right {
		background: #6a6a6a;
		clip-path: polygon(0 0, 100% 50%, 0 100%);
	}

	/* windows title and menu */
	.titlebar {
		display: flex;
		align-items: center;
		gap: 4px;
		height: 18px;
		padding: 0 14px 0 2px;
		background: #eef2f8;
		color: #1b1b1b;
		font-family: 'Open Sans', 'Noto Sans', sans-serif;
		font-size: 9px;
		--hole: #eef2f8;
	}

	.window-buttons {
		display: flex;
		gap: 28px;
		margin-left: auto;
	}

	.menubar {
		display: flex;
		gap: 12px;
		height: 16px;
		padding: 0 6px;
		background: #fff;
		color: #111;
		font-family: 'Open Sans', 'Noto Sans', sans-serif;
		font-size: 9px;
	}

	/* main toolbar */
	.toolbar {
		display: grid;
		grid-template-columns: 1fr auto 1fr;
		align-items: center;
		height: 24px;
		padding: 0 7px 0 6px;
	}

	.group {
		display: flex;
		gap: 3px;
	}

	.play {
		gap: 2px;
	}

	.end {
		justify-content: flex-end;
	}

	.btn {
		width: 24px;
		height: 15px;
		background: #383838;
		border-radius: 1px;
	}

	.account {
		width: 50px;
		gap: 5px;
	}

	.dim {
		background: #2c2c2c;
		color: #a0a0a0;
	}

	.wide {
		width: 63px;
		padding: 0 3px;
		justify-content: space-between;
	}

	/* panels */
	main {
		display: flex;
		flex: 1;
		gap: 3px;
		min-height: 0;
	}

	.left {
		display: flex;
		flex-direction: column;
		flex: 1;
		gap: 2px;
		min-width: 0;
	}

	.upper {
		display: flex;
		flex: 1;
		gap: 2px;
		min-height: 0;
	}

	.panel {
		display: flex;
		flex-direction: column;
		min-width: 0;
		min-height: 0;
		background: #383838;
	}

	.tabs {
		display: flex;
		flex: none;
		height: 16px;
		background: #282828;
	}

	.tab {
		gap: 4px;
		padding: 0 12px 0 6px;
	}

	.tab.active {
		background: #3c3c3c;
	}

	.tab.focus {
		box-shadow: inset 0 1px #2c5d87;
	}

	.tab-tools {
		display: flex;
		align-items: center;
		gap: 5px;
		margin-left: auto;
		padding-right: 6px;
	}

	.panel-bar {
		display: flex;
		flex: none;
		align-items: center;
		height: 16px;
		padding-left: 5px;
		background: #3c3c3c;
		border-bottom: 1px solid #232323;
	}

	.add {
		gap: 5px;
	}

	.searchbox {
		display: flex;
		flex: 1;
		align-items: center;
		gap: 4px;
		min-width: 0;
		height: 13px;
		padding: 0 4px;
		background: #2a2a2a;
		border: 1px solid #212121;
		border-radius: 3px;
	}

	.searchbox input {
		flex: 1;
	}

	.searchbox input::placeholder {
		color: #7a7a7a;
		opacity: 1;
	}

	/* hierarchy */
	.hierarchy {
		width: 181px;
	}

	.hierarchy .searchbox {
		margin-left: 9px;
	}

	.objects {
		flex: 1;
		background: linear-gradient(90deg, #323232 26px, #383838 26px);
	}

	.objects li {
		display: flex;
		align-items: center;
		height: 13px;
		padding-right: 6px;
	}

	.objects .scene {
		background: #2b2b2b;
		font-weight: 600;
	}

	.objects .selected {
		background: linear-gradient(90deg, #264a75 26px, #2c5d87 26px);
		color: #fff;
	}

	.gutter {
		width: 26px;
		line-height: 0;
		color: #777;
	}

	.item {
		display: flex;
		flex: 1;
		align-items: center;
		gap: 2px;
	}

	.item .arrow {
		margin: 0 2px;
	}

	.item.level1 {
		padding-left: 11px;
	}

	/* scene */
	.scene-panel {
		flex: 1;
	}

	.scene-bar {
		display: flex;
		flex: none;
		align-items: center;
		justify-content: space-between;
		height: 20px;
		padding-left: 4px;
		background: #3c3c3c;
	}

	.tools {
		display: flex;
		align-items: center;
		gap: 3px;
	}

	.grip {
		width: 4px;
		height: 13px;
		margin-right: 1px;
		border: 1px solid #4d4d4d;
		border-width: 0 1px;
	}

	.tbtn + .grip {
		margin-left: 4px;
	}

	.tbtn {
		gap: 2px;
		height: 15px;
		padding: 0 4px;
		background: #545454;
		border-radius: 2px;
	}

	.tbtn.sq {
		width: 25px;
	}

	.tbtn.twod {
		font-weight: 700;
	}

	.tbtn.on {
		background: #46607c;
		color: #f2f2f2;
	}

	.tbtn.off {
		background: #454545;
		color: #8a8a8a;
	}

	.tbtn.drop {
		padding: 0 2px;
	}

	.split {
		display: flex;
		gap: 1px;
	}

	.viewport {
		position: relative;
		flex: 1;
		overflow: hidden;
		background:
			linear-gradient(#5e5e5e, #5e5e5e) 95px 0 / 1px 100% no-repeat,
			linear-gradient(#585858, #585858) 0 198px / 100% 1px no-repeat,
			linear-gradient(90deg, #505050 1px, transparent 1px) 31px 0 / 32px 32px,
			linear-gradient(#505050 1px, transparent 1px) 0 6px / 32px 32px,
			#464646;
	}

	.canvas-object {
		position: absolute;
		left: 143px;
		top: 89px;
		width: 208px;
		height: 102px;
		background: #7b9e82;
		border: 1px solid #a9c4ad;
		color: #1d211e;
	}

	.tiles {
		position: absolute;
		left: 9px;
		top: 3px;
		width: 187px;
		height: 94px;
	}

	.menu-text {
		position: relative;
		padding-top: 12px;
		text-align: center;
		font-family: 'Liberation Sans', sans-serif;
		font-size: 9px;
		line-height: 13px;
		font-weight: 700;
	}

	.menu-text h2 {
		margin-bottom: 5px;
		font-size: 12px;
		line-height: 15px;
	}

	.frame {
		position: absolute;
		left: 7px;
		top: -1px;
		width: 188px;
		height: 102px;
		border: 1px solid #c3d2c6;
	}

	.handle {
		position: absolute;
		width: 4px;
		height: 4px;
		background: #fff;
	}

	.handle.n {
		left: 99px;
		top: -2px;
	}

	.handle.s {
		left: 99px;
		bottom: -2px;
	}

	.handle.w {
		left: 6px;
		top: 48px;
	}

	.handle.e {
		left: 192px;
		top: 48px;
	}

	.mini {
		position: absolute;
		left: 92px;
		top: 193px;
		width: 9px;
		height: 6px;
		background: #7b9e82;
		border: 1px solid #a9a9a9;
	}

	.tool-overlay {
		position: absolute;
		left: 1px;
		top: 3px;
		display: flex;
		flex-direction: column;
		align-items: center;
		gap: 2px;
		padding: 4px 3px 3px;
		background: #111;
		border-radius: 3px;
	}

	.bars {
		width: 13px;
		height: 3px;
		border: 1px solid #6b6b6b;
		border-width: 1px 0;
	}

	.tool-overlay .bars {
		margin-bottom: 5px;
	}

	.tool-overlay button {
		width: 25px;
		height: 15px;
		background: #585858;
	}

	.tool-overlay button.on {
		background: #46607c;
		color: #fff;
	}

	.camera-overlay {
		position: absolute;
		right: 0;
		top: 3px;
		width: 192px;
		background: #111;
		border-radius: 3px;
		overflow: hidden;
		padding: 0 3px 2px;
	}

	.camera-title {
		display: flex;
		align-items: center;
		gap: 5px;
		height: 12px;
		color: #9a9a9a;
	}

	.camera-view {
		height: 93px;
		background: #314d79;
		border: solid #000;
		border-width: 0 7px 0 8px;
	}

	/* project */
	.project {
		height: 153px;
	}

	.project .panel-bar {
		height: 18px;
	}

	.project-search {
		display: flex;
		gap: 2px;
		margin-left: auto;
		width: 372px;
	}

	.project-search button {
		width: 19px;
		height: 13px;
		background: #323232;
	}

	.project-search button:last-child {
		width: 31px;
	}

	.project-search .searchbox {
		margin-right: 2px;
	}

	.project-search .faded {
		color: #888;
	}

	.browser {
		display: flex;
		flex: 1;
		min-height: 0;
	}

	.folders {
		display: grid;
		grid-auto-rows: 1fr;
		width: 155px;
		padding-bottom: 4px;
	}

	.folders li {
		display: flex;
		align-items: center;
		gap: 4px;
		padding-left: 4px;
		white-space: nowrap;
	}

	.folders li.level0 {
		font-weight: 600;
	}

	.folders li.level1 {
		padding-left: 15px;
	}

	.folders li.current {
		gap: 3px;
		background: #4d4d4d;
	}

	.scrollbar {
		display: flex;
		flex-direction: column;
		align-items: center;
		width: 10px;
		padding: 4px 0;
		background: #323232;
	}

	.up,
	.scrollbar .down {
		width: 6px;
		height: 4px;
		background: #c4c4c4;
		clip-path: polygon(50% 0, 100% 100%, 0 100%);
	}

	.scrollbar .down {
		margin-top: auto;
		clip-path: polygon(0 0, 100% 0, 50% 100%);
	}

	.thumb {
		width: 7px;
		background: #5f5f5f;
		border-radius: 4px;
	}

	.tree-scroll .thumb {
		height: 67px;
		margin-top: 31px;
	}

	.file-scroll .thumb {
		height: 32px;
		margin-top: 33px;
	}

	.inspector-scroll .thumb {
		height: 352px;
		margin-top: 6px;
	}

	.files {
		display: flex;
		flex: 1;
		flex-direction: column;
		min-width: 0;
		border-left: 1px solid #232323;
	}

	.crumb {
		flex: none;
		height: 16px;
		padding: 1px 3px;
		background: #3c3c3c;
		font-weight: 600;
	}

	.file-area {
		display: flex;
		flex: 1;
		min-height: 0;
		background: #333;
	}

	.file-grid {
		display: grid;
		grid-template-columns: repeat(8, 1fr);
		align-content: end;
		row-gap: 13px;
		flex: 1;
		min-width: 0;
		padding: 0 8px 6px;
		overflow: hidden;
	}

	.file-label {
		display: flex;
		align-items: center;
		justify-content: center;
		gap: 2px;
		height: 12px;
		font-size: 8px;
		white-space: nowrap;
	}

	.file-grid figure {
		display: flex;
		flex-direction: column;
		align-items: center;
		gap: 2px;
	}

	.art {
		width: 48px;
		height: 48px;
	}

	.file-footer {
		display: flex;
		align-items: center;
		justify-content: flex-end;
		height: 17px;
		padding-right: 12px;
		background: #3c3c3c;
	}

	input[type='range'] {
		appearance: none;
		width: 44px;
		height: 1px;
		background: #5e5e5e;
	}

	input[type='range']::-webkit-slider-thumb {
		appearance: none;
		width: 8px;
		height: 8px;
		border-radius: 50%;
		background: #999;
	}

	/* inspector */
	.inspector {
		width: 329px;
	}

	.inspector-body {
		display: flex;
		flex: 1;
		min-height: 0;
	}

	.components {
		flex: 1;
		min-width: 0;
		overflow: hidden;
	}

	.object-head {
		display: flex;
		gap: 9px;
		height: 47px;
		padding: 7px 4px 0 4px;
		background: #3c3c3c;
	}

	.object-icon {
		display: flex;
		align-items: flex-start;
	}

	.object-icon .caret {
		margin: 17px 0 0 -2px;
	}

	.object-fields {
		display: flex;
		flex: 1;
		flex-direction: column;
		gap: 5px;
	}

	.object-row {
		display: flex;
		align-items: center;
		gap: 5px;
		height: 14px;
	}

	.object-row > input[type='text'] {
		flex: 1;
	}

	.static {
		display: flex;
		gap: 3px;
		margin-right: 6px;
	}

	.tags {
		gap: 3px;
		margin-left: -6px;
	}

	.tags .select {
		flex: 1;
	}

	.layer {
		margin-left: 9px;
	}

	.strong {
		font-weight: 600;
	}

	input[type='text'] {
		height: 14px;
	}

	.inspector input[type='text'] {
		width: 100%;
		padding: 0 2px;
		background: #2a2a2a;
		border: 1px solid #1a1a1a;
		border-radius: 2px;
		color: #d2d2d2;
	}

	input[type='checkbox'] {
		appearance: none;
		display: grid;
		place-items: center;
		flex: none;
		width: 11px;
		height: 11px;
		background: #2a2a2a;
		border: 1px solid #1e1e1e;
		border-radius: 2px;
	}

	input[type='checkbox']:checked::before {
		content: '';
		width: 8px;
		height: 4px;
		margin-bottom: 2px;
		border: solid #e8e8e8;
		border-width: 0 0 2px 2px;
		transform: rotate(-45deg) scale(0.8);
	}

	.select {
		display: grid;
		align-items: center;
		min-width: 0;
	}

	.select select,
	.select::after {
		grid-area: 1 / 1;
	}

	.select select {
		appearance: none;
		width: 100%;
		height: 13px;
		padding: 0 3px;
		background: #515151;
		box-shadow: 0 0 0 1px #303030;
		border-radius: 2px;
		line-height: 12px;
		color: #e0e0e0;
	}

	.select::after {
		content: '';
		justify-self: end;
		margin-right: 5px;
		border: 3px solid transparent;
		border-top: 3px solid #c4c4c4;
		border-bottom: 0;
		pointer-events: none;
	}

	.component-head {
		display: flex;
		align-items: center;
		gap: 6px;
		height: 18px;
		padding: 0 6px 0 5px;
		background: #3e3e3e;
		border-top: 1px solid #1a1a1a;
		border-bottom: 1px solid #303030;
	}

	.component-head h3 {
		margin-left: 14px;
		font-size: 10px;
		font-weight: 600;
		color: #d8d8d8;
	}

	.camera-head {
		gap: 5px;
	}

	.camera-head h3 {
		margin-left: 0;
	}

	.camera-icon {
		display: flex;
		color: #7fd6fd;
	}

	.head-tools {
		display: flex;
		gap: 7px;
		margin-left: auto;
	}

	.fields {
		display: flex;
		flex-direction: column;
		gap: 2px;
		padding: 3px 4px 8px 15px;
	}

	.row {
		display: grid;
		grid-template-columns: 110px minmax(0, 1fr);
		align-items: center;
		gap: 3px;
		height: 14px;
		white-space: nowrap;
	}

	.spaced {
		margin-top: 6px;
	}

	.name {
		display: flex;
		align-items: center;
		justify-content: space-between;
		padding-right: 4px;
	}

	.axes {
		display: grid;
		grid-template-columns: repeat(3, 1fr);
		gap: 5px;
	}

	.axis {
		display: grid;
		grid-template-columns: 12px minmax(0, 1fr);
		align-items: center;
	}

	.plane {
		display: grid;
		grid-template-columns: 29px minmax(0, 1fr);
		align-items: center;
	}

	.color-field,
	.object-field {
		display: flex;
		height: 14px;
		background: #2a2a2a;
		border: 1px solid #1a1a1a;
		border-radius: 2px;
	}

	.swatch {
		flex: 1;
		background: #314d79;
		border-bottom: 2px solid #000;
	}

	.pick {
		width: 14px;
		background: #373737;
	}

	.object-field input[type='text'] {
		flex: 1;
		height: 12px;
		border: 0;
	}

	.notice {
		display: flex;
		align-items: center;
		gap: 4px;
		padding: 0 4px;
		border: 1px solid #232323;
		border-radius: 2px;
		background: #404040;
		font-size: 8px;
		line-height: 10px;
		white-space: nowrap;
	}

	.notice .ico {
		color: #f0f0f0;
	}

	/* status bar */
	.status {
		display: flex;
		align-items: center;
		gap: 3px;
		height: 18px;
		padding: 0 5px 0 2px;
	}

	.status > .ico {
		color: #fff;
	}

	.status-icons {
		display: flex;
		gap: 10px;
		margin-left: auto;
	}

	/* windows taskbar */
	.taskbar {
		display: grid;
		grid-template-columns: 1fr auto 1fr;
		align-items: center;
		height: 38px;
		padding: 0 15px;
		background: linear-gradient(90deg, #e6eff8, #dce9f8 22%, #d5dcf5 36%, #dbe3f7 65%, #e9f1f9 80%, #eaf3fa);
		color: #1f1f1f;
		font-family: 'Open Sans', 'Noto Sans', sans-serif;
		font-size: 9px;
		line-height: 12px;
	}

	.weather {
		justify-self: start;
		gap: 6px;
		text-align: left;
		color: #555;
	}

	.temp {
		color: #1f1f1f;
	}

	.weather-icon {
		width: 20px;
		height: 14px;
	}

	.apps {
		display: flex;
		align-items: center;
		gap: 5px;
	}

	.apps button {
		position: relative;
		width: 30px;
		height: 30px;
		border-radius: 3px;
	}

	.apps button svg {
		width: 20px;
		height: 20px;
	}

	.apps .running::after {
		content: '';
		position: absolute;
		bottom: 0;
		width: 5px;
		height: 2px;
		border-radius: 1px;
		background: #7b808a;
	}

	.apps .current-app {
		background: #f3f6fc;
	}

	.apps .current-app::after {
		width: 13px;
		background: #0a6cce;
	}

	.task-search {
		display: flex;
		align-items: center;
		gap: 7px;
		width: 174px;
		height: 25px;
		padding: 0 1px 0 8px;
		background: #f4f7fd;
		border: 1px solid #cfd6ea;
		border-radius: 13px;
		font-size: 10px;
	}

	.task-search input {
		flex: 1;
	}

	.task-search input::placeholder {
		color: #555;
		opacity: 1;
	}

	.blend {
		display: flex;
		align-items: center;
		gap: 3px;
		height: 21px;
		padding: 0 4px;
		background: #000;
		border-radius: 11px;
		color: #fff;
		font-family: Inter, sans-serif;
		font-size: 7px;
		font-weight: 700;
	}

	.blend-mark {
		padding: 0 1px;
		line-height: 7px;
		background: #fff;
		color: #000;
	}

	.tray {
		display: flex;
		align-items: center;
		justify-content: flex-end;
		gap: 15px;
	}

	.network {
		display: flex;
		gap: 6px;
	}

	time {
		margin-right: -9px;
		text-align: right;
	}

	.badge {
		width: 13px;
		height: 13px;
		border-radius: 50%;
		background: #0a6cce;
		color: #fff;
		text-align: center;
	}
</style>
